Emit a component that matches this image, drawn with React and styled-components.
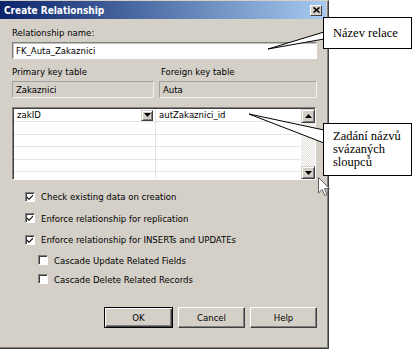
import React from 'react'
import styled, { createGlobalStyle } from 'styled-components'

const GlobalStyle = createGlobalStyle`
  body {
    margin: 0;
    background: #ffffff;
    font-family: "DejaVu Sans Condensed", "Liberation Sans", sans-serif;
    font-size: 9.5px;
    color: #000;
  }
`;

const Page = styled.div`
  position: relative;
  width: 414px;
  height: 349px;
  overflow: hidden;
  display: flex;
`;

const Dialog = styled.div`
  width: 328px;
  height: 347px;
  background: #d4d0c8;
  border-top: 1px solid #d4d0c8;
  border-right: 1px solid #404040;
  border-bottom: 1px solid #404040;
  box-shadow: inset -1px -1px 0 #808080;
  display: flex;
  flex-direction: column;
`;

const TitleBar = styled.div`
  height: 18px;
  margin-right: 2px;
  background: linear-gradient(to right, #0a246a, #a6caf0);
  display: flex;
  align-items: center;
  justify-content: space-between;
  padding: 0 4px 0 4px;
`;

const Title = styled.span`
  color: #fff;
  font-weight: bold;
  font-size: 10px;
  font-family: "DejaVu Sans Condensed", "Liberation Sans", sans-serif;
`;

const CloseButton = styled.div`
  width: 12px;
  height: 11px;
  box-sizing: border-box;
  background: #d4d0c8;
  border: 1px solid;
  border-color: #fff #404040 #404040 #fff;
  display: flex;
  align-items: center;
  justify-content: center;
`;

const Body = styled.div`
  flex: 1;
  padding: 0 11px 0 12px;
  display: flex;
  flex-direction: column;
`;

const Label = styled.div`
  height: 12px;
  line-height: 12px;
  margin-top: ${p => p.$top || 0}px;
`;

const Field = styled.div`
  height: 17px;
  box-sizing: border-box;
  margin-top: 3px;
  background: ${p => (p.$readonly ? '#d4d0c8' : '#ffffff')};
  border: 1px solid;
  border-color: ${p => (p.$readonly ? '#a0a0a0 #f0f0f0 #f0f0f0 #a0a0a0' : '#808080 #fff #fff #808080')};
  box-shadow: ${p => (p.$readonly ? 'none' : 'inset 1px 1px 0 #c0c0c0')};
  padding: 0 3px;
  line-height: 15px;
  display: flex;
  align-items: center;
`;

const TwoCols = styled.div`
  display: grid;
  grid-template-columns: 142px 1fr;
  column-gap: 5px;
  margin-top: ${p => p.$top || 0}px;
`;

const ColumnLabel = styled(Label)`
  padding-left: ${p => p.$pad || 0}px;
`;

const GridBox = styled.div`
  margin-top: 9px;
  margin-right: 1px;
  height: 73px;
  box-sizing: border-box;
  border: 1px solid;
  border-color: #808080 #fff #fff #808080;
  display: flex;
  background: #fff;
`;

const GridInner = styled.div`
  flex: 1;
  display: flex;
  border-left: 1px solid #404040;
  border-top: 1px solid #404040;
`;

const Rows = styled.div`
  flex: 1;
  display: flex;
  flex-direction: column;
  overflow: hidden;
`;

const Row = styled.div`
  flex: 0 0 ${p => p.$h}px;
  display: grid;
  grid-template-columns: 142px 1fr;
  border-bottom: 1px solid #e4e4e4;
`;

const Cell = styled.div`
  display: flex;
  align-items: center;
  justify-content: space-between;
  padding: 0 2px 0 3px;
  border-right: ${p => (p.$first ? '1px solid #e4e4e4' : 'none')};
  line-height: 12px;
`;

const ScrollBar = styled.div`
  width: 14px;
  display: flex;
  flex-direction: column;
  background-color: #fff;
  background-image: repeating-conic-gradient(#e2dfd8 0 25%, #ffffff 0 50%);
  background-size: 2px 2px;
`;

const ScrollButton = styled.div`
  width: 14px;
  height: ${p => p.$h || 13}px;
  box-sizing: border-box;
  background: #d4d0c8;
  border: 1px solid;
  border-color: #d4d0c8 #404040 #404040 #d4d0c8;
  box-shadow: inset 1px 1px 0 #fff, inset -1px -1px 0 #808080;
  display: flex;
  align-items: center;
  justify-content: center;
  margin-top: ${p => (p.$push ? 'auto' : '0')};
`;

const DropButton = styled(ScrollButton)`
  width: 12px;
  height: 11px;
`;

const Checks = styled.div`
  margin-top: 6px;
  display: flex;
  flex-direction: column;
`;

const CheckRow = styled.div`
  height: ${p => (p.$indent ? 19 : 21.5)}px;
  display: flex;
  align-items: center;
  padding-left: ${p => (p.$indent ? 26 : 13)}px;
  gap: 6px;
`;

const Box = styled.div`
  width: 10px;
  height: 10px;
  box-sizing: border-box;
  background: #fff;
  border: 1px solid;
  border-color: #808080 #fff #fff #808080;
  box-shadow: inset 1px 1px 0 #404040;
  display: flex;
  align-items: center;
  justify-content: center;
`;

const Buttons = styled.div`
  margin-top: 18px;
  display: flex;
  justify-content: flex-end;
  gap: 5px;
`;

const Button = styled.div`
  width: ${p => p.$w || 67}px;
  height: 21px;
  box-sizing: border-box;
  border: 1px solid;
  border-color: ${p => (p.$default ? '#000' : '#fff #404040 #404040 #fff')};
  box-shadow: ${p => (p.$default
    ? 'inset 1px 1px 0 #fff, inset -1px -1px 0 #404040, inset -2px -2px 0 #808080'
    : 'inset -1px -1px 0 #808080')};
  display: flex;
  align-items: center;
  justify-content: center;
`;

const Overlay = styled.svg`
  position: absolute;
  left: 0;
  top: 0;
  pointer-events: none;
`;

const Callout = styled.div`
  position: absolute;
  left: 323px;
  top: ${p => p.$top}px;
  width: 89px;
  height: ${p => p.$h}px;
  box-sizing: border-box;
  background: #fff;
  border: 1px solid #000;
  font-family: "Liberation Serif", "Times New Roman", serif;
  font-size: 12.5px;
  line-height: 13px;
  padding: ${p => p.$pad};
  display: flex;
  flex-direction: column;
  justify-content: ${p => (p.$center ? 'center' : 'flex-start')};
`;

const Cursor = styled.svg`
  position: absolute;
  left: 318px;
  top: 177px;
`;

const Check = () => (
  <svg width="8" height="8" viewBox="0 0 8 8">
    <path d="M1 3.5 L3 5.5 L7 1.5 L7 3 L3 7 L1 5 Z" fill="#000" />
  </svg>
);

const Arrow = ({ up }) => (
  <svg width="7" height="4" viewBox="0 0 7 4">
    <path d={up ? 'M3.5 0 L7 4 L0 4 Z' : 'M0 0 L7 0 L3.5 4 Z'} fill="#000" />
  </svg>
);

const rowHeights = [12, 11.5, 11.5, 11.5, 11.5, 11];

const checks = [
  { text: 'Check existing data on creation', on: true },
  { text: 'Enforce relationship for replication', on: true },
  { text: 'Enforce relationship for INSERTs and UPDATEs', on: true },
  { text: 'Cascade Update Related Fields', indent: true },
  { text: 'Cascade Delete Related Records', indent: true },
];

export default function App() {
  return (
    <Page>
      <GlobalStyle />
      <Dialog>
        <TitleBar>
          <Title>Create Relationship</Title>
          <CloseButton>
            <svg width="7" height="6" viewBox="0 0 7 6">
              <path d="M0.5 0.5 L6.5 5.5 M6.5 0.5 L0.5 5.5" stroke="#000" strokeWidth="1.6" />
            </svg>
          </CloseButton>
        </TitleBar>
        <Body>
          <Label $top={8}>Relationship name:</Label>
          <Field>FK_Auta_Zakaznici</Field>
          <TwoCols $top={7}>
            <ColumnLabel>Primary key table</ColumnLabel>
            <ColumnLabel $pad={2}>Foreign key table</ColumnLabel>
          </TwoCols>
          <TwoCols>
            <Field $readonly>Zakaznici</Field>
            <Field $readonly>Auta</Field>
          </TwoCols>
          <GridBox>
            <GridInner>
              <Rows>
                {rowHeights.map((h, i) => (
                  <Row key={i} $h={h}>
                    <Cell $first>
                      {i === 0 && <span>zakID</span>}
                      {i === 0 && <DropButton><Arrow /></DropButton>}
                    </Cell>
                    <Cell>{i === 0 && <span>autZakaznici_id</span>}</Cell>
                  </Row>
                ))}
              </Rows>
              <ScrollBar>
                <ScrollButton $h={14}><Arrow up /></ScrollButton>
                <ScrollButton $h={13} $push><Arrow /></ScrollButton>
              </ScrollBar>
            </GridInner>
          </GridBox>
          <Checks>
            {checks.map(c => (
              <CheckRow key={c.text} $indent={c.indent}>
                <Box>{c.on && <Check />}</Box>
                <span>{c.text}</span>
              </CheckRow>
            ))}
          </Checks>
          <Buttons>
            <Button $default $w={69}>OK</Button>
            <Button>Cancel</Button>
            <Button>Help</Button>
          </Buttons>
        </Body>
      </Dialog>

      <Overlay width="414" height="349">
        <polygon points="324,32 268,49 324,39" fill="#fff" stroke="#000" strokeWidth="1" />
        <polygon points="324,130 249,114 324,143" fill="#fff" stroke="#000" strokeWidth="1" />
      </Overlay>
      <Callout $top={17} $h={32} $pad="0 0 0 9px" $center>Název relace</Callout>
      <Callout $top={123} $h={53} $pad="6px 0 0 9px">
        <span>Zadání názvů</span>
        <span>svázaných</span>
        <span>sloupců</span>
      </Callout>
      <Cursor width="13" height="20" viewBox="0 0 13 20">
        <path d="M0.5 0.5 L0.5 16 L4.2 12.4 L6.8 18.5 L9 17.6 L6.5 11.6 L11.5 11.6 Z"
          fill="#fff" stroke="#606060" strokeWidth="1" />
      </Cursor>
    </Page>
  )
}
